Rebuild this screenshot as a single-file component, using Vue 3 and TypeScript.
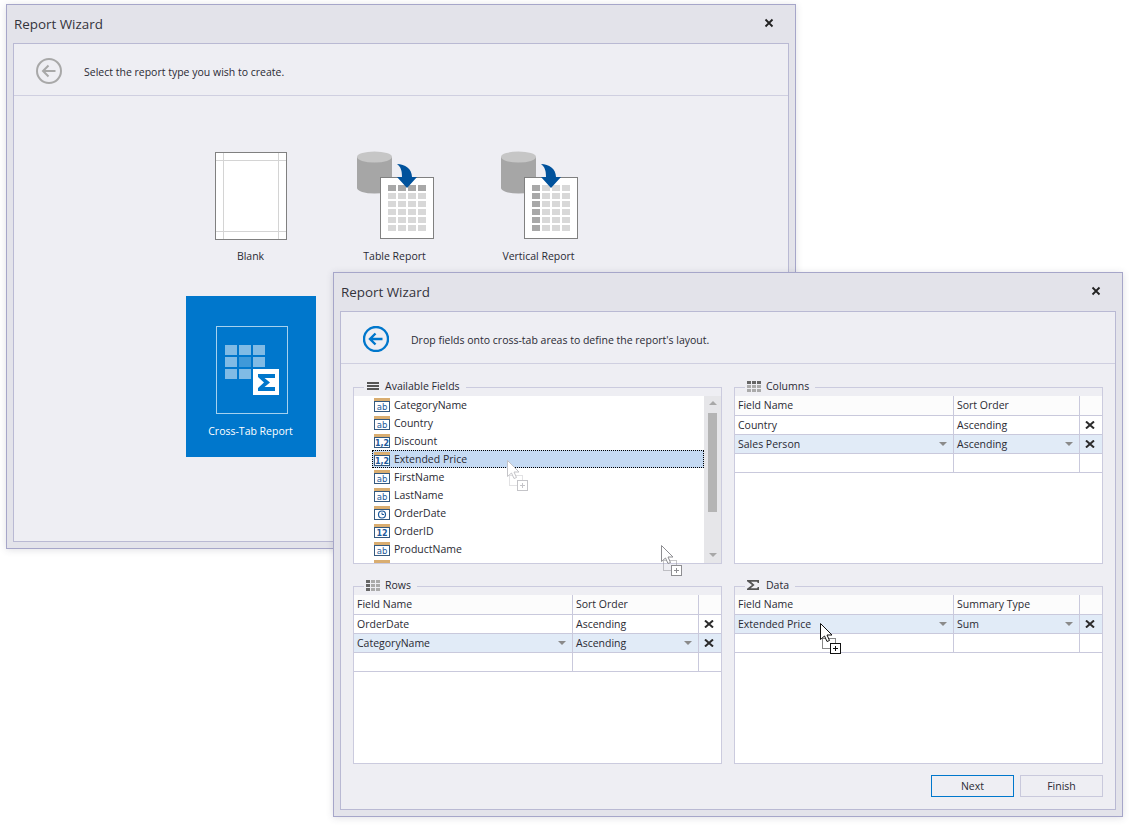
<script setup lang="ts">
type FieldType = 'text' | 'float' | 'date' | 'int';
type GroupIcon = 'lines' | 'columns' | 'rows' | 'sigma';

interface FieldItem {
  name: string;
  type: FieldType;
}
interface TableRow {
  field: string;
  value: string;
  active?: boolean;
}
interface Group {
  title: string;
  icon: GroupIcon;
  valueHeader?: string;
  rows?: TableRow[];
}

const tiles = [
  { kind: 'blank', label: 'Blank' },
  { kind: 'table', label: 'Table Report' },
  { kind: 'vertical', label: 'Vertical Report' },
  { kind: 'cross', label: 'Cross-Tab Report' },
];

// the last row is scrolled almost out of view, only the top of its icon shows
const fields: FieldItem[] = [
  { name: 'CategoryName', type: 'text' },
  { name: 'Country', type: 'text' },
  { name: 'Discount', type: 'float' },
  { name: 'Extended Price', type: 'float' },
  { name: 'FirstName', type: 'text' },
  { name: 'LastName', type: 'text' },
  { name: 'OrderDate', type: 'date' },
  { name: 'OrderID', type: 'int' },
  { name: 'ProductName', type: 'text' },
  { name: '', type: 'date' },
];

const groups: Group[] = [
  { title: 'Available Fields', icon: 'lines' },
  {
    title: 'Columns',
    icon: 'columns',
    valueHeader: 'Sort Order',
    rows: [
      { field: 'Country', value: 'Ascending' },
      { field: 'Sales Person', value: 'Ascending', active: true },
    ],
  },
  {
    title: 'Rows',
    icon: 'rows',
    valueHeader: 'Sort Order',
    rows: [
      { field: 'OrderDate', value: 'Ascending' },
      { field: 'CategoryName', value: 'Ascending', active: true },
    ],
  },
  {
    title: 'Data',
    icon: 'sigma',
    valueHeader: 'Summary Type',
    rows: [{ field: 'Extended Price', value: 'Sum', active: true }],
  },
];

const typeLabel: Record<FieldType, string> = { text: 'ab', float: '1,2', date: '', int: '12' };

const docCols = [33, 43, 53, 63];
const docRows = [35, 43, 51, 59, 67, 75];
const crossCols = [14, 28, 42];
const crossRows = [21, 33, 45];
const three = [0, 1, 2];

const dragGhosts = [
  { id: 'list', style: { left: '507px', top: '460px' }, tone: 'ghost-faint' },
  { id: 'gap', style: { left: '661px', top: '545px' }, tone: 'ghost-mid' },
  { id: 'data', style: { left: '820px', top: '623px' }, tone: 'ghost-dark' },
];
</script>

<template>
  <div class="desktop">
    <section class="window window-back">
      <header class="title-bar">
        <span class="title">Report Wizard</span>
        <svg class="close" width="10" height="10" viewBox="0 0 10 10">
          <path d="M1.5 1.5l7 7M8.5 1.5l-7 7" />
        </svg>
      </header>
      <div class="page">
        <div class="page-head">
          <svg class="back back-off" width="26" height="26" viewBox="0 0 26 26">
            <circle cx="13" cy="13" r="12" />
            <path d="M19.5 13H7M12.5 7.5L7 13l5.5 5.5" />
          </svg>
          <span>Select the report type you wish to create.</span>
        </div>
        <div class="tile-grid">
          <div v-for="tile in tiles" :key="tile.kind" class="tile" :class="{ 'tile-on': tile.kind === 'cross' }">
            <svg width="80" height="90" viewBox="0 0 80 90">
              <template v-if="tile.kind === 'blank'">
                <rect x="4.5" y="2.5" width="71" height="87" fill="#fff" stroke="#808080" />
                <path d="M12.5 3v86M67.5 3v86M5 10.5h70M5 81.5h70" stroke="#d4d4d4" fill="none" />
              </template>
              <template v-else-if="tile.kind === 'cross'">
                <rect x="5.5" y="2.5" width="71" height="87" fill="none" stroke="#a6d1ee" />
                <template v-for="r in crossRows" :key="r">
                  <rect
                    v-for="c in crossCols"
                    :key="c"
                    :x="c"
                    :y="r"
                    width="12"
                    height="10"
                    :fill="c === 28 && r === 33 ? '#3f99d9' : '#80bbe5'"
                  />
                </template>
                <rect x="42" y="45" width="26" height="26" fill="#fff" />
                <path d="M47 50h17v4H53.5l5.5 4.5-5.5 4.5H64v4H47v-3l6-5.5-6-5.5z" fill="#0077cc" />
              </template>
              <template v-else>
                <path d="M2 7v31a17.5 5.5 0 0 0 35 0V7z" fill="#a6a6a6" />
                <ellipse cx="19.5" cy="7" rx="17.5" ry="5.5" fill="#c6c6c6" />
                <rect x="25.5" y="27.5" width="53" height="61" fill="#fff" stroke="#808080" />
                <template v-for="(y, ri) in docRows" :key="y">
                  <rect
                    v-for="(x, ci) in docCols"
                    :key="x"
                    :x="x"
                    :y="y"
                    width="8"
                    height="6"
                    :fill="(tile.kind === 'table' ? ri === 0 : ci === 0) ? '#a8a8a8' : '#d8d8d8'"
                  />
                </template>
                <path d="M42 14c8 0 15 5 15 13h5L52 38 42 27h5c0-6-1-10-5-13z" fill="#00529c" />
              </template>
            </svg>
            <span class="tile-label">{{ tile.label }}</span>
          </div>
        </div>
      </div>
    </section>

    <section class="window window-front">
      <header class="title-bar">
        <span class="title">Report Wizard</span>
        <svg class="close" width="10" height="10" viewBox="0 0 10 10">
          <path d="M1.5 1.5l7 7M8.5 1.5l-7 7" />
        </svg>
      </header>
      <div class="page">
        <div class="page-head">
          <svg class="back back-on" width="26" height="26" viewBox="0 0 26 26">
            <circle cx="13" cy="13" r="12" />
            <path d="M19.5 13H7M12.5 7.5L7 13l5.5 5.5" />
          </svg>
          <span>Drop fields onto cross-tab areas to define the report's layout.</span>
        </div>
        <div class="group-grid">
          <fieldset v-for="group in groups" :key="group.title" class="group">
            <legend class="group-title">
              <svg width="14" height="12" viewBox="0 0 14 12">
                <path v-if="group.icon === 'lines'" d="M1 2h12v2H1zM1 5h12v2H1zM1 8h12v2H1z" fill="#555" />
                <path
                  v-else-if="group.icon === 'sigma'"
                  d="M0 1h12v3h-1.200L10 2.800H4L7.600 6 3.600 9.200H10l.8-1.200H12v3H0V9.800L5 6 0 2.200z"
                  fill="#555"
                />
                <template v-else>
                  <template v-for="r in three" :key="r">
                    <rect
                      v-for="c in three"
                      :key="c"
                      :x="c * 5"
                      :y="1 + r * 4"
                      width="4"
                      height="3"
                      :fill="(group.icon === 'columns' ? r === 0 : c === 0) ? '#666' : '#aaa'"
                    />
                  </template>
                </template>
              </svg>
              <span>{{ group.title }}</span>
            </legend>

            <div v-if="!group.rows" class="field-box">
              <ul class="field-list">
                <li
                  v-for="item in fields"
                  :key="item.name"
                  class="field-item"
                  :class="{ 'field-item-on': item.name === 'Extended Price' }"
                >
                  <svg width="16" height="14" viewBox="0 0 16 14">
                    <rect width="16" height="3" fill="#d9ad70" />
                    <rect x="0.5" y="3.500" width="15" height="10" fill="#fff" stroke="#34597f" />
                    <template v-if="item.type === 'date'">
                      <circle cx="8" cy="8.500" r="3.500" fill="none" stroke="#1c5a9c" stroke-width="1.200" />
                      <path d="M8 6.500v2h2" fill="none" stroke="#1c5a9c" />
                    </template>
                    <text v-else x="8" y="11.500" class="type-text" :class="{ 'type-num': item.type !== 'text' }">
                      {{ typeLabel[item.type] }}
                    </text>
                  </svg>
                  <span v-if="item.name">{{ item.name }}</span>
                </li>
              </ul>
              <div class="scrollbar">
                <i class="scroll-up"></i>
                <div class="scroll-track"><div class="scroll-thumb"></div></div>
                <i class="scroll-down"></i>
              </div>
            </div>

            <div v-else class="grid-box">
              <div class="grid-row grid-head">
                <div class="cell"><span>Field Name</span></div>
                <div class="cell">
                  <span>{{ group.valueHeader }}</span>
                </div>
                <div class="cell"></div>
              </div>
              <div v-for="row in group.rows" :key="row.field" class="grid-row" :class="{ 'grid-row-on': row.active }">
                <div class="cell">
                  <span>{{ row.field }}</span>
                  <i v-if="row.active" class="drop"></i>
                </div>
                <div class="cell">
                  <span>{{ row.value }}</span>
                  <i v-if="row.active" class="drop"></i>
                </div>
                <div class="cell cell-x">
                  <svg width="10" height="8" viewBox="0 0 10 8">
                    <path d="M1 0.500l8 7M9 0.500l-8 7" />
                  </svg>
                </div>
              </div>
              <div class="grid-row">
                <div class="cell"></div>
                <div class="cell"></div>
                <div class="cell"></div>
              </div>
            </div>
          </fieldset>
        </div>
        <footer class="actions">
          <button class="btn btn-next" type="button">Next</button>
          <button class="btn" type="button">Finish</button>
        </footer>
      </div>
    </section>

    <svg
      v-for="ghost in dragGhosts"
      :key="ghost.id"
      class="drag-ghost"
      :class="ghost.tone"
      :style="ghost.style"
      width="24"
      height="34"
      viewBox="0 0 24 34"
    >
      <rect class="ghost-dots" x="2.500" y="15.500" width="13" height="10" />
      <path class="ghost-arrow" d="M0.500 0.500v16l4-3.500 2.500 5.500 2.500-1-2.500-5.500h5z" />
      <rect class="ghost-box" x="10.500" y="20.500" width="10" height="10" />
      <path class="ghost-plus" d="M13 25.500h5M15.500 23v5" />
    </svg>
  </div>
</template>

<style scoped>
.desktop {
  position: relative;
  width: 1129px;
  height: 825px;
  overflow: hidden;
  font-family: 'Open Sans', 'Noto Sans', sans-serif;
  font-size: 10.5px;
  color: #2a2a33;
}

.window {
  position: absolute;
  width: 790px;
  height: 545px;
  box-sizing: border-box;
  display: flex;
  flex-direction: column;
  border: 1px solid #a6a6c9;
  background: #e3e3ea;
  box-shadow: 0 1px 7px rgba(60, 60, 90, 0.16);
}
.window-back {
  left: 6px;
  top: 4px;
}
.window-front {
  left: 333px;
  top: 272px;
}

.title-bar {
  height: 38px;
  flex: none;
  box-sizing: border-box;
  display: flex;
  align-items: center;
  justify-content: space-between;
  padding: 0 21px 0 7px;
}
.title {
  font-size: 13.4px;
  color: #33333b;
}
.close {
  margin-bottom: 2px;
}
.close path {
  fill: none;
  stroke: #222;
  stroke-width: 1.800;
}

.page {
  flex: 1;
  min-height: 0;
  margin: 0 6px 6px;
  display: flex;
  flex-direction: column;
  border: 1px solid #b9b9d3;
  background: #eeeef3;
}
.page-head {
  height: 51px;
  flex: none;
  display: flex;
  align-items: center;
  gap: 22px;
  padding: 0 0 0 22px;
  border-bottom: 1px solid #cfcfe0;
}
.back {
  margin-top: 3px;
}
.page-head span {
  margin-top: 5px;
}
.back circle,
.back path {
  fill: none;
}
.back-off circle,
.back-off path {
  stroke: #a8a8a8;
  stroke-width: 2;
}
.back-on circle,
.back-on path {
  stroke: #0077cc;
  stroke-width: 2.400;
}

.tile-grid {
  display: grid;
  grid-template-columns: repeat(3, 130px);
  grid-auto-rows: 161px;
  gap: 13px 14px;
  padding: 26px 0 0 172px;
}
.tile {
  display: flex;
  flex-direction: column;
  align-items: center;
  padding-top: 28px;
  box-sizing: border-box;
}
.tile-on {
  background: #0077cc;
  color: #fff;
}
.tile-label {
  margin-top: 8px;
  padding-right: 1px;
  line-height: 16px;
}
.tile-on .tile-label {
  margin-top: 9px;
}

.group-grid {
  display: grid;
  grid-template-columns: 369px 369px;
  grid-template-rows: 186px 187px;
  gap: 13px 12px;
  padding: 14px 12px 0;
}
.group {
  min-width: 0;
  margin: 0;
  padding: 0;
  border: 1px solid #cbcbde;
  display: flex;
  flex-direction: column;
}
.group-title {
  height: 18px;
  margin-left: 10px;
  padding: 0 6px 0 2px;
  display: flex;
  align-items: flex-start;
  gap: 5px;
  line-height: 16px;
}
.group-title svg {
  margin-top: 2px;
}

.field-box {
  flex: 1;
  min-height: 0;
  display: flex;
  background: #fff;
}
.field-list {
  flex: 1;
  min-width: 0;
  margin: 0;
  padding: 0 0 0 18px;
  list-style: none;
  overflow: hidden;
}
.field-item {
  height: 18px;
  box-sizing: border-box;
  display: flex;
  align-items: center;
  gap: 4px;
  padding-left: 1px;
  border: 1px solid transparent;
}
.field-item-on {
  background: #c5daf3;
  border: 1px dotted #000;
}
.type-text {
  font-family: 'DejaVu Sans', sans-serif;
  font-size: 8.5px;
  fill: #1c5a9c;
  text-anchor: middle;
}
.type-num {
  font-size: 8px;
  font-weight: 700;
}

.scrollbar {
  width: 17px;
  flex: none;
  display: flex;
  flex-direction: column;
  align-items: center;
  background: #e6e6e9;
}
.scrollbar i {
  flex: none;
  width: 0;
  height: 0;
  border-left: 4px solid transparent;
  border-right: 4px solid transparent;
}
.scroll-up {
  margin-top: 5px;
  border-bottom: 4px solid #a8a8a8;
}
.scroll-down {
  margin-bottom: 6px;
  border-top: 4px solid #a8a8a8;
}
.scroll-track {
  flex: 1;
  width: 9px;
  padding-top: 8px;
}
.scroll-thumb {
  height: 99px;
  background: #b4b4b4;
}

.grid-box {
  flex: 1;
  min-height: 0;
  background: #fff;
}
.grid-row {
  height: 19px;
  box-sizing: border-box;
  display: grid;
  grid-template-columns: 219px 126px 22px;
  border-bottom: 1px solid #c9c9dc;
}
.grid-head {
  height: 20px;
  background: #fcfcfc;
}
.grid-row-on {
  background: #e1ebf7;
}
.cell {
  min-width: 0;
  padding: 0 6px 0 3px;
  box-sizing: border-box;
  display: flex;
  align-items: center;
  justify-content: space-between;
  border-right: 1px solid #c9c9dc;
}
.grid-head .cell span {
  margin-bottom: 2px;
}
.cell:last-child {
  border-right: 0;
}
.cell-x {
  justify-content: center;
  padding: 0 2px 0 0;
}
.cell-x path {
  fill: none;
  stroke: #2b2b2b;
  stroke-width: 2;
}
.drop {
  width: 0;
  height: 0;
  border-left: 4px solid transparent;
  border-right: 4px solid transparent;
  border-top: 4px solid #8a8a8a;
}

.actions {
  display: flex;
  justify-content: flex-end;
  gap: 6px;
  padding: 11px 12px 0;
}
.btn {
  width: 83px;
  height: 22px;
  padding: 0;
  border: 1px solid #c9c9dc;
  background: transparent;
  font: inherit;
  color: inherit;
}
.btn-next {
  border-color: #0077cc;
}

.drag-ghost {
  position: absolute;
  overflow: visible;
}
.ghost-dots {
  fill: none;
  stroke-dasharray: 1 1;
}
.ghost-arrow,
.ghost-box {
  fill: #fff;
}
.ghost-plus {
  fill: none;
}
.ghost-faint * {
  stroke: #c4c4c8;
}
.ghost-mid * {
  stroke: #8e8e92;
}
.ghost-dark * {
  stroke: #111;
}
</style>

<style>
body {
  background: #fff;
}
</style>
